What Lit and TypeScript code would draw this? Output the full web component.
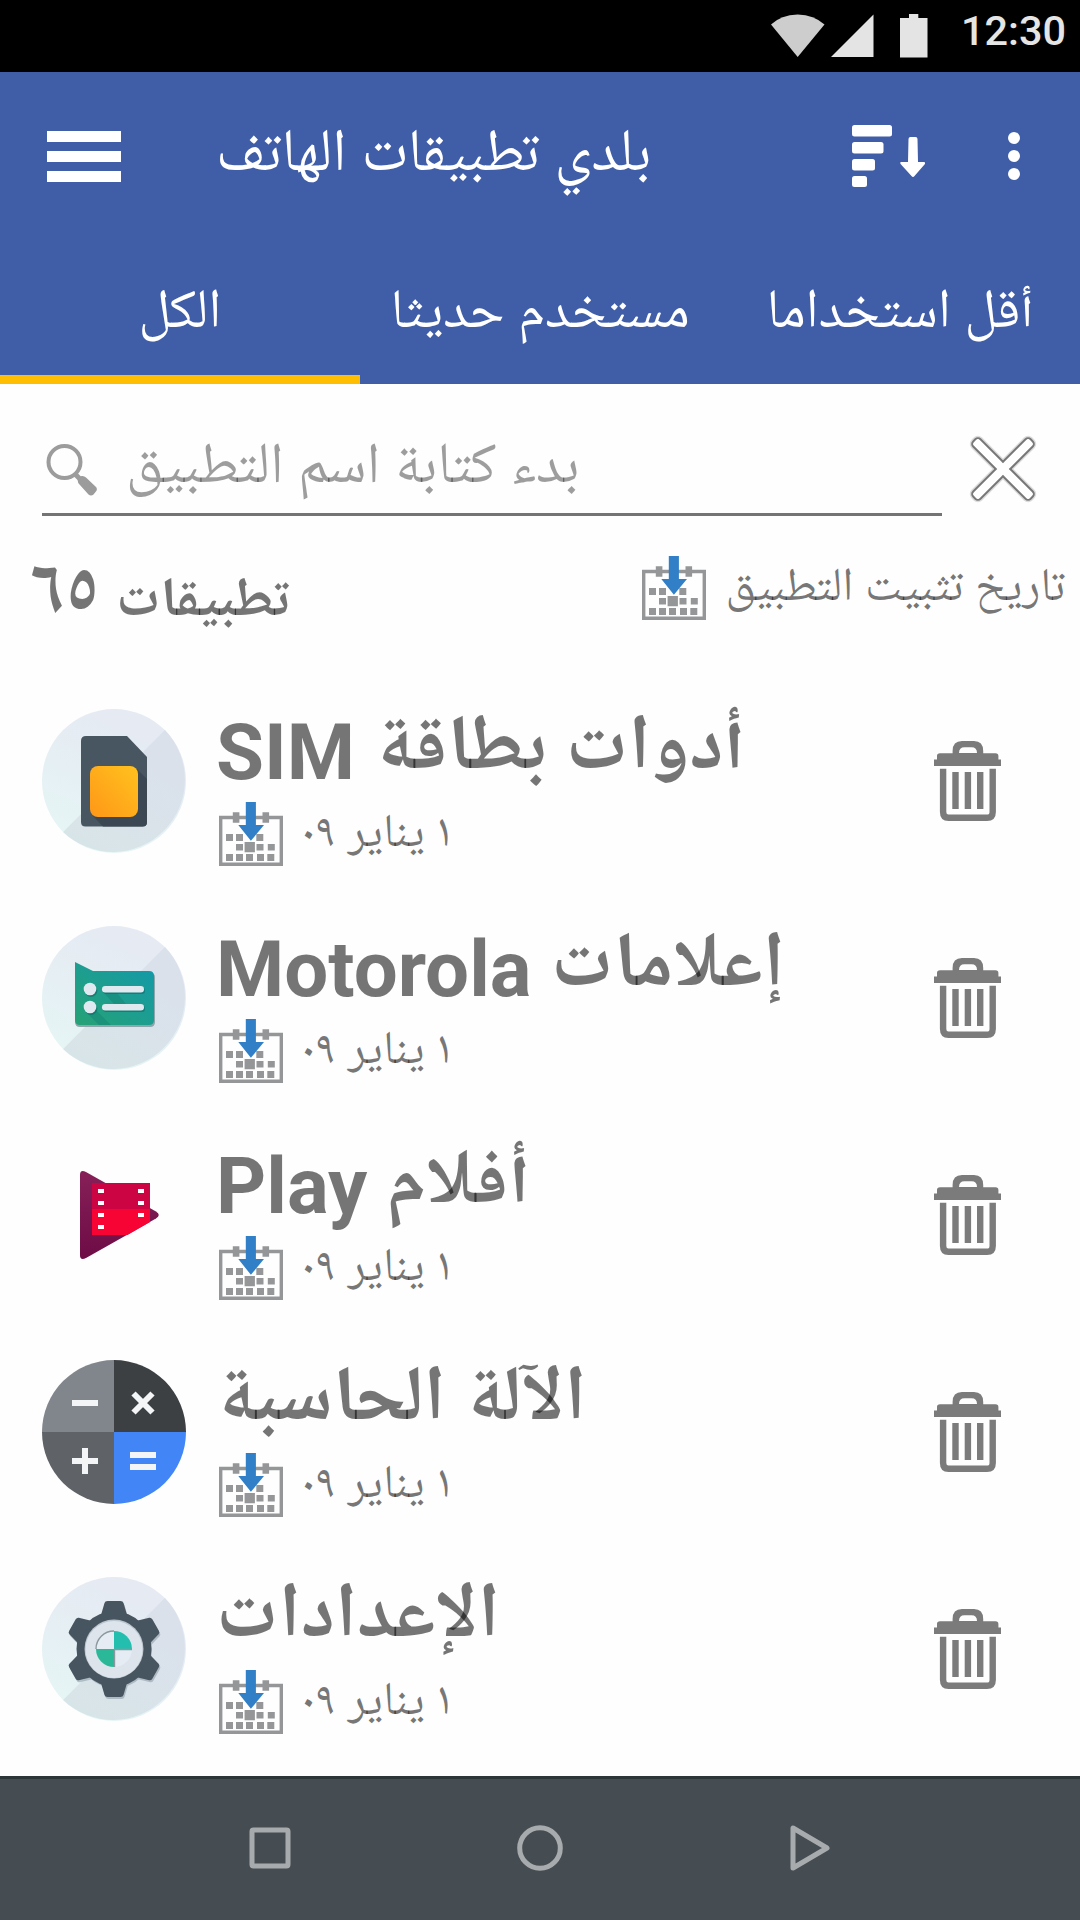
import { LitElement, html, css, svg } from "lit";
import { customElement, property } from "lit/decorators.js";

const calendar = html`<svg width="64" height="64" viewBox="0 0 64 64">
  <path fill="none" stroke="#949698" stroke-width="3.4" d="M1.7 15.5H62.3V62.3H1.7Z"/>
  <g fill="#949698">
    <path d="M13.8 10.3h6.6v10.4h-6.6zM43.5 10.3h6.6v10.4h-6.6z"/>
    <path d="M7 32h7v7H7zM17 32h7v7h-7zM37.3 32h7v7h-7zM17 42h7v6.600h-7zM25.600 40h10.300v10.300H25.600zM37.500 42h7v6.600h-7zM48.800 42h7v6.600h-7zM7 52h7v7H7zM17 52h7v7h-7zM27 52h7v7h-7zM38 52h7v7h-7zM48.300 52h7v7h-7z"/>
  </g>
  <path fill="#317fc6" d="M26.8 0H36.9V23H45L31.9 38.8L19.3 23H26.8Z"/>
</svg>`;

const trash = html`<svg width="67" height="80" viewBox="0 0 67 80" fill="#7b7b7b">
  <path fill-rule="evenodd" d="M18.6 13V10Q18.6 0 28 0H40Q49.2 0 49.2 10V13ZM25 12H43Q43 6.2 37.5 6.2H30.5Q25 6.2 25 12Z"/>
  <path d="M3 18V15Q3 12.2 6 12.2H61.5Q64.4 12.2 64.4 15V18.6H67V25H0V18.6H3Z"/>
  <path fill="none" stroke="#7b7b7b" stroke-width="6.4" d="M9.1 27.7V71Q9.1 76.8 14.5 76.8H53Q58.7 76.8 58.7 71V27.7"/>
  <path d="M18.3 31h6.4v37h-6.4zM30.7 31h6.4v37h-6.4zM43 31h6.4v37H43z"/>
</svg>`;

const disc = (id: string) => svg`
  <defs>
    <linearGradient id="${id}a" x1="0.2" y1="1" x2="0.6" y2="0.1"><stop offset="0" stop-color="#e6f6f5"/><stop offset="1" stop-color="#e5eaf3"/></linearGradient>
    <linearGradient id="${id}b" x1="0.3" y1="1" x2="0.7" y2="0.3"><stop offset="0" stop-color="#d8e5e8"/><stop offset="1" stop-color="#dae1eb"/></linearGradient>
  </defs>
  <circle cx="72" cy="72" r="72" fill="url(#${id}a)"/>
  <path fill="url(#${id}b)" d="M122.9 21.1A72 72 0 0 1 21.1 122.9Z"/>`;

const simArt = svg`${disc("s")}
  <defs>
    <linearGradient id="sy" x1="0" y1="1" x2="1" y2="0"><stop offset="0" stop-color="#ff9718"/><stop offset="1" stop-color="#ffc21e"/></linearGradient>
  </defs>
  <path fill="#485662" d="M44 27H85L105 48V113Q105 117.500 100.500 117.500H43.500Q39 117.500 39 113V32Q39 27 44 27Z"/>
  <path fill="#3b4854" d="M94 59L105 70V113Q105 117.500 100.500 117.500H61L51 107Z"/>
  <rect x="48" y="57" width="48" height="51" rx="8" fill="url(#sy)"/>`;

const motoArt = svg`${disc("m")}
  <defs>
    <linearGradient id="mg" x1="0" y1="1" x2="1" y2="0"><stop offset="0" stop-color="#26a275"/><stop offset="1" stop-color="#1399ab"/></linearGradient>
  </defs>
  <path fill="#8fa5ab" d="M33 38L51 47H108Q113 47 113 51V96Q113 101 108 101H38Q33 101 33 96Z"/>
  <path fill="url(#mg)" d="M33 36L51 45H107Q112 45 112 50V94Q112 99 107 99H38Q33 99 33 94Z"/>
  <path fill="#148073" opacity=".45" d="M62 67L72 78H84L75 67ZM44 86L57 99H69L53 83Z"/>
  <g fill="#0e6a68" opacity=".6"><circle cx="49" cy="64.500" r="6.400"/><circle cx="49" cy="82.500" r="6.400"/><rect x="61" y="61.500" width="42" height="6.400" rx="3.200"/><rect x="61" y="79.500" width="42" height="6.400" rx="3.200"/></g>
  <g fill="#e0e9ef"><circle cx="48" cy="63" r="6.300"/><circle cx="48" cy="81" r="6.300"/><rect x="60" y="60" width="42" height="6.400" rx="3.200"/><rect x="60" y="78" width="42" height="6.400" rx="3.200"/></g>`;

const moviesArt = svg`
  <defs>
    <linearGradient id="pg" x1="0" y1="0" x2="0" y2="1"><stop offset="0" stop-color="#872059"/><stop offset="1" stop-color="#6d0c45"/></linearGradient>
  </defs>
  <path fill="url(#pg)" d="M38 32Q38 26 44 29L114 68.500Q119.500 72 114 75.500L44 115Q38 118 38 112Z"/>
  <rect x="50" y="40" width="58" height="26" fill="#cc0444"/>
  <path fill="#f70434" d="M50 66H108V79L85.500 92H50Z"/>
  <path fill="#fff" d="M56 46h6v4h-6zM56 58h6v4h-6zM56 70h6v4h-6zM56 82h6v4h-6zM96 46h6v4h-6zM96 58h6v4h-6zM96 70h6v4h-6z"/>`;

const calcArt = svg`
  <path fill="#80868c" d="M72 72H0A72 72 0 0 1 72 0Z"/>
  <path fill="#3c4043" d="M72 72V0A72 72 0 0 1 144 72Z"/>
  <path fill="#5f6367" d="M72 72V144A72 72 0 0 1 0 72Z"/>
  <path fill="#4285f7" d="M72 72H144A72 72 0 0 1 72 144Z"/>
  <path fill="none" stroke="#f3f5f7" stroke-width="6" d="M30 43H56M30 101H56M43 88V114M88 95H114M88 107H114M91.500 33.500L110.500 52.500M110.500 33.500L91.500 52.500"/>`;

const tooth = "M59 38L62.500 26Q63 24 65.500 24H78.500Q81 24 81.500 26L85 38Z";
const teeth = [0, 60, 120, 180, 240, 300].map(a => svg`<path transform="rotate(${a} 72 72)" d="${tooth}"/>`);
const settingsArt = svg`${disc("g")}
  <g fill="#8d9ba6" opacity=".55" transform="translate(1 2)"><circle cx="72" cy="72" r="37"/>${teeth}</g>
  <g fill="#475561"><circle cx="72" cy="72" r="37.500"/>${teeth}</g>
  <circle cx="72" cy="72" r="29.500" fill="#bcc6cf"/><circle cx="72" cy="72.500" r="28.500" fill="#dde4ec"/>
  <circle cx="72" cy="72" r="18" fill="#e6ecf3"/>
  <path fill="#24beaf" d="M72 72V54A18 18 0 0 1 90 72Z"/>
  <path fill="#2bb898" d="M72 72V90A18 18 0 0 1 54 72Z"/>
  <path fill="none" stroke="#8b999f" stroke-width="1.400" d="M54 72A18 18 0 0 1 72 54M72.500 90V72.500H90"/>`;

interface AppEntry { art: unknown; name: string; installed: string; }

const apps: AppEntry[] = [
  { art: simArt, name: "أدوات بطاقة SIM", installed: "١ يناير ٠٩" },
  { art: motoArt, name: "إعلامات Motorola", installed: "١ يناير ٠٩" },
  { art: moviesArt, name: "أفلام Play", installed: "١ يناير ٠٩" },
  { art: calcArt, name: "الآلة الحاسبة", installed: "١ يناير ٠٩" },
  { art: settingsArt, name: "الإعدادات", installed: "١ يناير ٠٩" },
];

@customElement("app-row")
class AppRow extends LitElement {
  static styles = css`
    :host { display: flex; height: 217px; box-sizing: border-box; padding: 37px 79px 0 42px; align-items: flex-start; white-space: nowrap; line-height: 1.2; }
    svg { display: block; flex: none; }
    .info { display: flex; flex-direction: column; align-items: flex-start; flex: 1; margin-left: 30px; }
    .title { height: 96px; margin-top: -3px; font-size: 78px; font-weight: 700; direction: rtl; }
    .date { display: flex; gap: 18px; margin-left: 3px; font-size: 47px; }
    .day { margin-top: 6px; direction: rtl; }
    .bin { margin-top: 32px; }
  `;
  @property({ attribute: false }) app!: AppEntry;
  render() {
    return html`
      <svg width="144" height="144" viewBox="0 0 144 144">${this.app.art}</svg>
      <div class="info">
        <div class="title">${this.app.name}</div>
        <div class="date">${calendar}<span class="day">${this.app.installed}</span></div>
      </div>
      <div class="bin">${trash}</div>`;
  }
}

@customElement("app-root")
class AppRoot extends LitElement {
  static styles = css`
    :host { display: flex; flex-direction: column; width: 1080px; height: 1920px; overflow: hidden; background: #fefefe; color: rgba(0, 0, 0, 0.54);
      white-space: nowrap; line-height: 1.2;
      font-family: Roboto, "Noto Naskh Arabic UI", "Noto Naskh Arabic", "DejaVu Sans", sans-serif; }
    svg { display: block; flex: none; }
    .status { display: flex; height: 72px; background: #000; color: #e5e5e5; padding-left: 771px; box-sizing: border-box; align-items: flex-start; font-size: 41.4px; font-weight: 500; }
    .clock { margin: 7px 0 0 33px; }
    .header { background: #405da8; color: #fff; }
    .toolbar { display: flex; height: 168px; box-sizing: border-box; padding: 0 60px 0 47px; align-items: flex-start; }
    .menu { display: flex; flex-direction: column; gap: 9px; width: 74px; margin-top: 59px; }
    .bar { height: 11px; background: #fff; }
    .heading { margin: 50px 0 0 95px; font-size: 60px; }
    .actions { display: flex; margin: 53px 0 0 auto; gap: 83px; }
    .tabs { display: grid; grid-template-columns: repeat(3, 1fr); height: 144px; font-size: 55.2px; }
    .tab { display: flex; justify-content: center; box-sizing: border-box; padding-top: 42px; border-bottom: 9px solid transparent; }
    .active { border-bottom-color: #ffbe02; }
    .search { display: flex; height: 144px; box-sizing: border-box; padding: 0 42px; align-items: flex-start; justify-content: space-between; }
    .field { display: flex; width: 900px; height: 132px; box-sizing: border-box; border-bottom: 3px solid #737575; padding: 60px 0 0 4px; }
    .hint { margin: -8px 0 0 28px; font-size: 57.7px; color: rgba(0, 0, 0, 0.38); }
    .close { margin: 49px -1px 0 0; }
    .summary { display: flex; height: 144px; box-sizing: border-box; padding: 28px 15px 0 30px; justify-content: space-between; align-items: flex-start; }
    .count { display: flex; gap: 18px; margin-top: -6px; align-items: baseline; font-weight: 700; font-size: 55.2px; }
    .number { font-size: 77.6px; }
    .sort { display: flex; gap: 19px; font-size: 46.8px; }
    .criterion { margin-top: 6px; }
    .nav { display: flex; margin-top: auto; height: 144px; box-sizing: border-box; border-top: 3px solid #2c3538; padding-bottom: 3px; background: #454c52; justify-content: center; align-items: center; gap: 222px; flex: none; }
  `;
  render() {
    return html`
      <div class="status">
        <svg width="157" height="60" viewBox="0 0 157 60">
          <path fill="#cdcdcd" d="M0 24.500Q10 15 26.700 14.500Q43 15 53.500 24.500L26.700 57Z"/>
          <path fill="#e4e4e4" d="M60 57L102.500 14.500V57ZM129 18h9v-4h9.300v4h9.200v39.500h-27.500z"/>
        </svg>
        <span class="clock">12:30</span>
      </div>
      <div class="header">
        <div class="toolbar">
          <div class="menu"><div class="bar"></div><div class="bar"></div><div class="bar"></div></div>
          <span class="heading">بلدي تطبيقات الهاتف</span>
          <div class="actions">
            <svg width="73" height="62" viewBox="0 0 73 62" fill="#fff">
              <rect width="40" height="11.500" rx="2.500"/><rect y="17" width="31.500" height="11.500" rx="2.500"/><rect y="34" width="23" height="11.500" rx="2.500"/><rect y="51" width="15" height="11" rx="2.500"/>
              <path d="M56.500 14Q56.500 12 58.500 12H63.500Q65.500 12 65.500 14L66 37H72Q74 37.500 72.500 39.500L62.500 51Q61 53 59.500 51L49 39.500Q47.500 37.500 49 37H56Z"/>
            </svg>
            <svg width="12" height="62" viewBox="0 0 12 62" fill="#fff"><circle cx="6" cy="13" r="6"/><circle cx="6" cy="31" r="6"/><circle cx="6" cy="49" r="6"/></svg>
          </div>
        </div>
        <div class="tabs">
          <div class="tab active">الكل</div>
          <div class="tab">مستخدم حديثا</div>
          <div class="tab">أقل استخداما</div>
        </div>
      </div>
      <div class="search">
        <div class="field">
          <svg width="52" height="52" viewBox="0 0 52 52">
            <circle cx="18.500" cy="18" r="16" fill="none" stroke="#9c9c9c" stroke-width="4"/>
            <path d="M29 30L36 37" stroke="#9c9c9c" stroke-width="5"/>
            <path fill="#9c9c9c" d="M32 34.500L35.500 32Q38 31.500 40 33.500L50 43Q52 45.500 49.500 48L47.500 50.500Q45 52.500 42.500 50.500L33.500 40.500Q31 38 32 34.500Z"/>
          </svg>
          <span class="hint">بدء كتابة اسم التطبيق</span>
        </div>
        <svg class="close" width="72" height="72" viewBox="0 0 72 72">
          <g fill="none" stroke="#dcdcdc" stroke-width="5"><rect x="-4.500" y="31" width="81" height="10" rx="3.500" transform="rotate(45 36 36)"/><rect x="-4.500" y="31" width="81" height="10" rx="3.500" transform="rotate(-45 36 36)"/></g>
          <g fill="none" stroke="#787878" stroke-width="2.200"><rect x="-4.500" y="31" width="81" height="10" rx="3.500" transform="rotate(45 36 36)"/><rect x="-4.500" y="31" width="81" height="10" rx="3.500" transform="rotate(-45 36 36)"/></g>
          <g fill="#fff"><rect x="-3.500" y="32" width="79" height="8" rx="2.500" transform="rotate(45 36 36)"/><rect x="-3.500" y="32" width="79" height="8" rx="2.500" transform="rotate(-45 36 36)"/></g>
        </svg>
      </div>
      <div class="summary">
        <div class="count">
          <span class="number">٦٥</span>
          <span>تطبيقات</span>
        </div>
        <div class="sort">${calendar}<span class="criterion">تاريخ تثبيت التطبيق</span></div>
      </div>
      ${apps.map(a => html`<app-row .app=${a}></app-row>`)}
      <div class="nav">
        <svg width="48" height="48" viewBox="0 0 48 48"><rect x="6" y="6" width="36" height="36" rx="1.500" fill="none" stroke="#a8abad" stroke-width="5"/></svg>
        <svg width="48" height="48" viewBox="0 0 48 48"><circle cx="24" cy="24" r="20.300" fill="none" stroke="#a8abad" stroke-width="5"/></svg>
        <svg width="48" height="48" viewBox="0 0 48 48"><path d="M7 4V44L41 24Z" fill="none" stroke="#a8abad" stroke-width="5" stroke-linejoin="round"/></svg>
      </div>`;
  }
}
